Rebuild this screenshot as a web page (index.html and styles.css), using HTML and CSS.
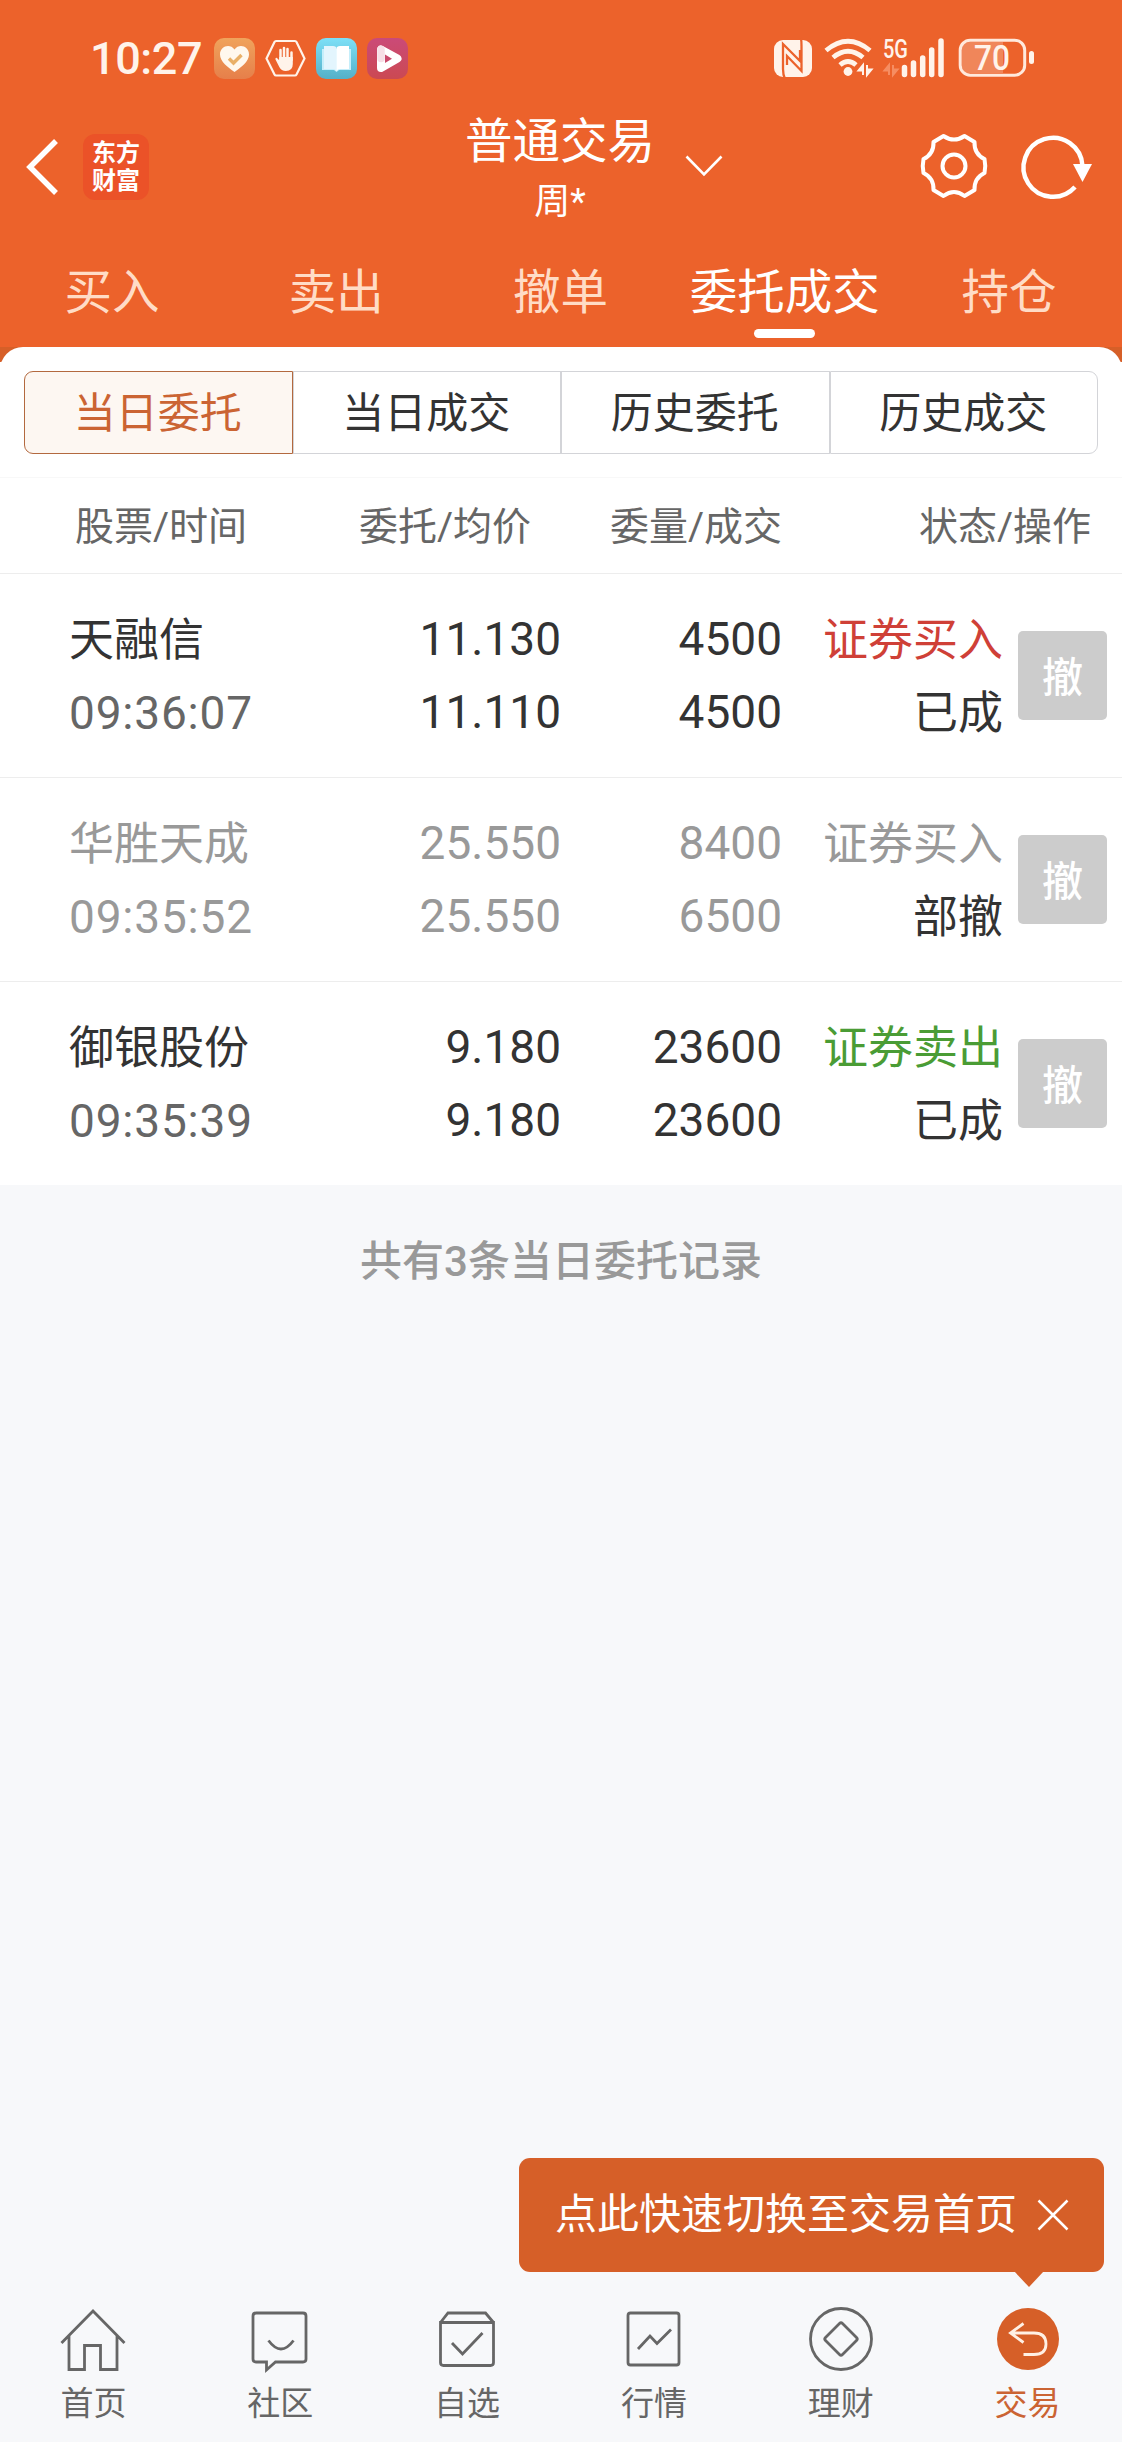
FILE: index.html
```html
<!DOCTYPE html>
<html lang="zh-CN">
<head>
    <meta charset="UTF-8">
    <meta name="viewport" content="width=device-width, initial-scale=1.0">
    <title>普通交易</title>
    <link rel="stylesheet" href="styles.css">
</head>
<body>
<div class="app">
    <header class="header">
        <div class="status-bar">
            <span class="clock">10:27</span>
            <div class="notices">
                <svg width="41" height="41" viewBox="0 0 41 41">
                    <defs>
                        <linearGradient id="gHeart" x1="0" y1="0" x2="0" y2="1"><stop offset="0" stop-color="#f0a35c"/><stop offset="1" stop-color="#e67f4a"/></linearGradient>
                        <linearGradient id="gBook" x1="0" y1="0" x2="0" y2="1"><stop offset="0" stop-color="#7de0f7"/><stop offset="1" stop-color="#55b0c8"/></linearGradient>
                        <linearGradient id="gPlay" x1="0" y1="0" x2="0" y2="1"><stop offset="0" stop-color="#cb4a78"/><stop offset="1" stop-color="#cb4952"/></linearGradient>
                    </defs>
                    <rect width="41" height="41" rx="10" fill="url(#gHeart)"/>
                    <path d="M20.5 34C14 29.5 6 23.5 6 16.5C6 8 16 5 20.5 11.5C25 5 35 8 35 16.5C35 23.5 27 29.5 20.5 34Z" fill="#fff8ee"/>
                    <path d="M15 20.5l4.5 4.5 8-8" fill="none" stroke="#e9b068" stroke-width="3.4"/>
                </svg>
                <svg width="41" height="41" viewBox="0 0 41 41">
                    <path d="M11 3h19q1 0 1.5 1l8 16.5-8 16q-.5 1-1.5 1h-19q-1 0-1.5-1l-8-16 8-16.5q.5-1 1.5-1z" fill="none" stroke="#fff3ea" stroke-width="2.2"/>
                    <path d="M15.500 22V12M19 20V10M22.500 20V11M26.500 22V14.500" stroke="#fff3ea" stroke-width="2.5" stroke-linecap="round"/>
                    <path d="M14.200 19h13.600v7q0 7-7 7-4.500 0-6.500-4l-3.800-7.500q-.5-2 1.200-1.800l2.500 2.600z" fill="#fff3ea"/>
                </svg>
                <svg width="41" height="41" viewBox="0 0 41 41">
                    <rect width="41" height="41" rx="10" fill="url(#gBook)"/>
                    <path d="M6 11h29v21H23l-2.5 2-2.5-2H6z" fill="#c5eefa"/>
                    <path d="M8 8h9q3.500 0 3.500 2.500V33q-1-2-4-2H8z" fill="#e3f5fd"/>
                    <path d="M33 8h-9q-3.500 0-3.500 2.500V33q1-2 4-2H33z" fill="#fff"/>
                </svg>
                <svg width="41" height="41" viewBox="0 0 41 41">
                    <rect width="41" height="41" rx="10" fill="url(#gPlay)"/>
                    <path d="M14 11.500v18.500l16.500-9.500z" fill="none" stroke="#fff" stroke-width="8" stroke-linejoin="round"/>
                    <path d="M14 11.500v9" stroke="#f7dfe6" stroke-width="7.5" stroke-linecap="round"/>
                    <path d="M18 16.500v8.500l7-4.300z" fill="#c94a6c"/>
                </svg>
            </div>
            <svg class="signals" width="262" height="42" viewBox="0 0 262 42">
                <!-- NFC -->
                <rect x="1" y="3" width="38" height="37" rx="9" fill="#fff3ea"/>
                <path d="M12 42Q10 38 10 32V7L27 24V13M28 1Q28.500 4 28.500 9V34L14 19V28" fill="none" stroke="#ec622b" stroke-width="2.3"/>
                <!-- wifi -->
                <g fill="none" stroke="#fff3ea" stroke-width="4.8">
                    <path d="M53 13.500Q75 -5 97 13.500"/>
                    <path d="M60 20.500Q75 8 90 20.500"/>
                    <path d="M67 28Q75 21 83 28"/>
                </g>
                <circle cx="75" cy="34.500" r="4.400" fill="#fff3ea"/>
                <path d="M90 38V28l-4.500 5.500H90M94 28v10l4.500-5.500H94" fill="#fff3ea" stroke="#fff3ea" stroke-width="2"/>
                <!-- 5G -->
                <text class="net" x="110" y="21" textLength="25" lengthAdjust="spacingAndGlyphs">5G</text>
                <path d="M116 38V28l-4.500 5.500h4.500M120 28v10l4.500-5.500H120" fill="#f68d62" stroke="#f68d62" stroke-width="2"/>
                <path d="M131.500 30.500v7M140.500 26v11.500M149.700 21v16.500M158.700 13v24.500M168 4v33.500" stroke="#fff3ea" stroke-width="5.5" stroke-linecap="round"/>
                <!-- battery -->
                <path d="M195 5h35v31h-35q-6 0-6-6V11q0-6 6-6z" fill="#f0865a"/>
                <rect x="187.200" y="3.200" width="64.500" height="35" rx="10" fill="none" stroke="#ffe9dc" stroke-width="3"/>
                <rect x="256" y="14" width="5" height="13" rx="2.500" fill="#fff3ea"/>
                <text class="charge" x="201" y="33" textLength="36" lengthAdjust="spacingAndGlyphs">70</text>
            </svg>
        </div>

        <div class="title-bar">
            <div class="side">
                <svg class="back" width="36" height="60" viewBox="0 0 36 60"><path d="M31 4L5 30l26 26" fill="none" stroke="#fff" stroke-width="5.5"/></svg>
                <div class="logo">东方<br>财富</div>
            </div>
            <div class="title">
                <h1>普通交易</h1>
                <p>周*</p>
                <svg class="arrow" width="38" height="22" viewBox="0 0 38 22"><path d="M1.500 1.500L19 19.500 36.500 1.500" fill="none" stroke="#fff" stroke-width="2.6"/></svg>
            </div>
            <div class="side side-right">
                <svg width="68" height="68" viewBox="0 0 68 68" fill="none" stroke="#fff" stroke-width="4">
                    <path d="M23.500 3Q34 10 44.500 3L54.500 9Q54 21 64.500 26Q66 33 64.500 40Q54 45 54.500 57L44.500 63Q34 55 23.500 63L13.500 57Q14 45 3.500 40Q2 33 3.500 26Q14 21 13.500 9Z" stroke-linejoin="round"/>
                    <circle cx="34" cy="33" r="11.500"/>
                </svg>
                <svg width="72" height="68" viewBox="0 0 72 68">
                    <path d="M54 54A29.500 29.500 0 1 1 61.500 33" fill="none" stroke="#fff" stroke-width="4.5"/>
                    <path d="M52 31h19L61.500 49z" fill="#fff"/>
                </svg>
            </div>
        </div>

        <nav class="tabs">
            <a class="tab">买入</a>
            <a class="tab">卖出</a>
            <a class="tab">撤单</a>
            <a class="tab active">委托成交</a>
            <a class="tab">持仓</a>
        </nav>
    </header>

    <div class="sheet-wrap">
        <main class="sheet">
            <div class="segments">
                <a class="segment active">当日委托</a>
                <a class="segment">当日成交</a>
                <a class="segment">历史委托</a>
                <a class="segment">历史成交</a>
            </div>

            <div class="list-head">
                <span>股票/时间</span>
                <span>委托/均价</span>
                <span>委量/成交</span>
                <span>状态/操作</span>
            </div>

            <div class="order">
                <div class="cell name">天融信<br><span class="time">09:36:07</span></div>
                <div class="cell num">11.130<br>11.110</div>
                <div class="cell num">4500<br>4500</div>
                <div class="cell status"><span class="buy">证券买入</span><br>已成</div>
                <button class="cancel">撤</button>
            </div>
            <div class="order muted">
                <div class="cell name">华胜天成<br><span class="time">09:35:52</span></div>
                <div class="cell num">25.550<br>25.550</div>
                <div class="cell num">8400<br>6500</div>
                <div class="cell status"><span class="buy">证券买入</span><br><span class="state">部撤</span></div>
                <button class="cancel">撤</button>
            </div>
            <div class="order">
                <div class="cell name">御银股份<br><span class="time">09:35:39</span></div>
                <div class="cell num">9.180<br>9.180</div>
                <div class="cell num">23600<br>23600</div>
                <div class="cell status"><span class="sell">证券卖出</span><br>已成</div>
                <button class="cancel">撤</button>
            </div>
        </main>
    </div>

    <p class="summary">共有3条当日委托记录</p>

    <div class="tip">
        <span>点此快速切换至交易首页</span>
        <svg width="32" height="32" viewBox="0 0 32 32"><path d="M1.500 1.500l29 29M30.500 1.500l-29 29" stroke="#fff" stroke-width="2.5"/></svg>
    </div>

    <nav class="bottom-nav">
        <a class="nav-item">
            <svg width="66" height="66" viewBox="0 0 66 66"><path d="M1.500 37L33 5l31.500 32M9 30v33.500h15.500V39.500h16v24H57V30"/></svg>
            首页
        </a>
        <a class="nav-item">
            <svg width="66" height="66" viewBox="0 0 66 66"><path d="M9 7h47q3 0 3 3v43q0 3-3 3H28.500L19.500 64V56H9q-3 0-3-3V10q0-3 3-3zM21.500 34.500q12.500 17 25 0"/></svg>
            社区
        </a>
        <a class="nav-item">
            <svg width="66" height="66" viewBox="0 0 66 66"><path d="M6.500 16.500h53v40q0 3-3 3h-47q-3 0-3-3zM6.500 16.500l7.500-9.500h37.500l8 9.500M18 37l10.500 11L48.500 27"/></svg>
            自选
        </a>
        <a class="nav-item">
            <svg width="66" height="66" viewBox="0 0 66 66"><rect x="7" y="7" width="51" height="52" rx="2.500"/><path d="M17 43l12-13 7 7.500L50 23.500"/></svg>
            行情
        </a>
        <a class="nav-item">
            <svg width="66" height="66" viewBox="0 0 66 66"><circle cx="33" cy="33" r="30.500"/><path d="M31.500 17.500q1.500-1.500 3 0l14 14q1.500 1.500 0 3l-14 14q-1.500 1.500-3 0l-14-14q-1.500-1.500 0-3z"/></svg>
            理财
        </a>
        <a class="nav-item active">
            <svg width="66" height="66" viewBox="0 0 66 66"><circle class="disc" cx="33" cy="33" r="31"/><path d="M28.500 17.500L15.500 27l13 9.500M15.500 27H39q12 0 12 11 0 10.500-12 10.500H28.500"/></svg>
            交易
        </a>
    </nav>
</div>
</body>
</html>
```

FILE: styles.css
```css
* {
    box-sizing: border-box;
}
body {
    margin: 0;
    background-color: #f7f8fa;
    font-family: Roboto, "Noto Sans CJK SC", sans-serif;
    color: #333;
}
svg {
    display: block;
    flex-shrink: 0;
    overflow: visible;
}
.app {
    display: flex;
    flex-direction: column;
    height: 2442px;
}

/* header */
.header {
    background-color: #ec622b;
    color: #fff;
}
.status-bar {
    display: flex;
    align-items: center;
    height: 116px;
    padding: 0 87px 0 90px;
}
.clock {
    width: 124px;
    font-size: 45px;
    font-weight: 500;
    letter-spacing: -0.4px;
    line-height: 60px;
    padding-bottom: 2px;
    margin-top: 3px;
    color: #fff3ea;
}
.notices {
    display: flex;
    gap: 10px;
}
.signals {
    margin-left: auto;
}
.net {
    font-size: 25px;
    font-weight: 500;
    fill: #fff3ea;
}
.charge {
    font-size: 35px;
    font-weight: 500;
    fill: #fff3ea;
}
.title-bar {
    display: flex;
    align-items: center;
    justify-content: space-between;
    height: 102px;
    padding: 0 29px 0 25px;
}
.side {
    display: flex;
    align-items: center;
    gap: 22px;
    width: 240px;
}
.side-right {
    justify-content: flex-end;
    gap: 33px;
}
.logo {
    width: 66px;
    height: 66px;
    padding-top: 5px;
    border-radius: 12px;
    background-color: #eb5228;
    font-size: 24px;
    font-weight: 700;
    line-height: 28px;
    text-align: center;
}
.title {
    position: relative;
    margin: 10px 0 0 2px;
    text-align: center;
}
.title h1 {
    margin: 0;
    font-size: 47.5px;
    font-weight: 400;
    line-height: 60px;
}
.title p {
    margin: 0;
    font-size: 36px;
    line-height: 60px;
}
.arrow {
    position: absolute;
    left: 220px;
    top: 43px;
}
.tabs {
    display: grid;
    grid-template-columns: repeat(5, 1fr);
    height: 129px;
    padding: 45px 1px 0 0;
}
.tab {
    display: flex;
    flex-direction: column;
    align-items: center;
    font-size: 47.5px;
    line-height: 60px;
    color: #ffdcc6;
}
.tab.active {
    color: #fff;
}
.tab.active::after {
    content: "";
    width: 61px;
    height: 9px;
    margin-top: 6px;
    border-radius: 5px;
    background-color: #fff;
}

/* orders */
.sheet-wrap {
    background: linear-gradient(#d65f28 15px, #fff 15px);
}
.sheet {
    padding-top: 24px;
    border-radius: 23px 23px 0 0;
    background-color: #fff;
}
.segments {
    display: grid;
    grid-template-columns: repeat(4, 1fr);
    height: 83px;
    margin: 0 24px 23px;
}
.segment {
    padding: 3px 1px 0 0;
    border: 1px solid #d3d4d8;
    font-size: 42px;
    line-height: 78px;
    text-align: center;
}
.segment:first-child {
    border-radius: 9px 0 0 9px;
}
.segment:last-child {
    border-radius: 0 9px 9px 0;
}
.segment.active {
    border-color: #b3693f;
    background-color: #fdf7f2;
    color: #cb6433;
}
.list-head {
    display: grid;
    grid-template-columns: 284px 172px 251px 309px;
    height: 97px;
    padding-left: 75px;
    border-top: 1px solid #f8f8f8;
    border-bottom: 1px solid #ededed;
    font-size: 39px;
    line-height: 98px;
    color: #666;
    text-align: right;
    white-space: nowrap;
}
.list-head span:first-child {
    text-align: left;
}
.order {
    display: grid;
    grid-template-columns: 321px 171px 221px 221px 104px;
    align-items: center;
    height: 204px;
    padding-left: 69px;
    border-bottom: 1px solid #ededed;
}
.order:last-child {
    height: 203px;
    border-bottom: none;
}
.cell {
    font-size: 45px;
    line-height: 73px;
    text-align: right;
}
.cell.name {
    padding-top: 2px;
    text-align: left;
}
.cell.num {
    padding-top: 1px;
    font-size: 46px;
}
.cell.status {
    padding-top: 3px;
}
.time {
    font-size: 46px;
    letter-spacing: 0.8px;
    color: #666;
}
.buy {
    color: #cf4037;
}
.sell {
    color: #4a9c35;
}
.muted,
.muted .time,
.muted .buy {
    color: #999;
}
.muted .state {
    color: #333;
}
.cancel {
    justify-self: end;
    width: 89px;
    height: 89px;
    padding: 0 0 4px;
    border: none;
    border-radius: 5px;
    background-color: #ccc;
    font-family: inherit;
    font-size: 41px;
    font-weight: 500;
    color: #fff;
}
.summary {
    margin: 47px 0 0;
    font-size: 42px;
    font-weight: 500;
    line-height: 60px;
    color: #999;
    text-align: center;
}

/* bottom */
.tip {
    position: relative;
    display: flex;
    align-items: center;
    justify-content: space-between;
    width: 585px;
    height: 114px;
    margin: auto 18px 0 auto;
    padding: 0 35px 0 36px;
    border-radius: 11px;
    background-color: #d65f28;
    font-size: 42px;
    line-height: 60px;
    color: #fff;
}
.tip::after {
    content: "";
    position: absolute;
    top: 113px;
    right: 60px;
    border: 15px solid transparent;
    border-top: 16px solid #d65f28;
    border-bottom: none;
}
.bottom-nav {
    display: grid;
    grid-template-columns: repeat(6, 1fr);
    height: 170px;
    padding: 34px 1px 0 0;
}
.nav-item {
    display: flex;
    flex-direction: column;
    align-items: center;
    gap: 10px;
    font-size: 33px;
    line-height: 44px;
    color: #666;
}
.nav-item svg {
    fill: none;
    stroke: #666;
    stroke-width: 2.8;
}
.nav-item.active {
    color: #cb6433;
}
.nav-item.active svg {
    stroke: #fff0e4;
}
.nav-item .disc {
    fill: #d65f28;
    stroke: none;
}
```
